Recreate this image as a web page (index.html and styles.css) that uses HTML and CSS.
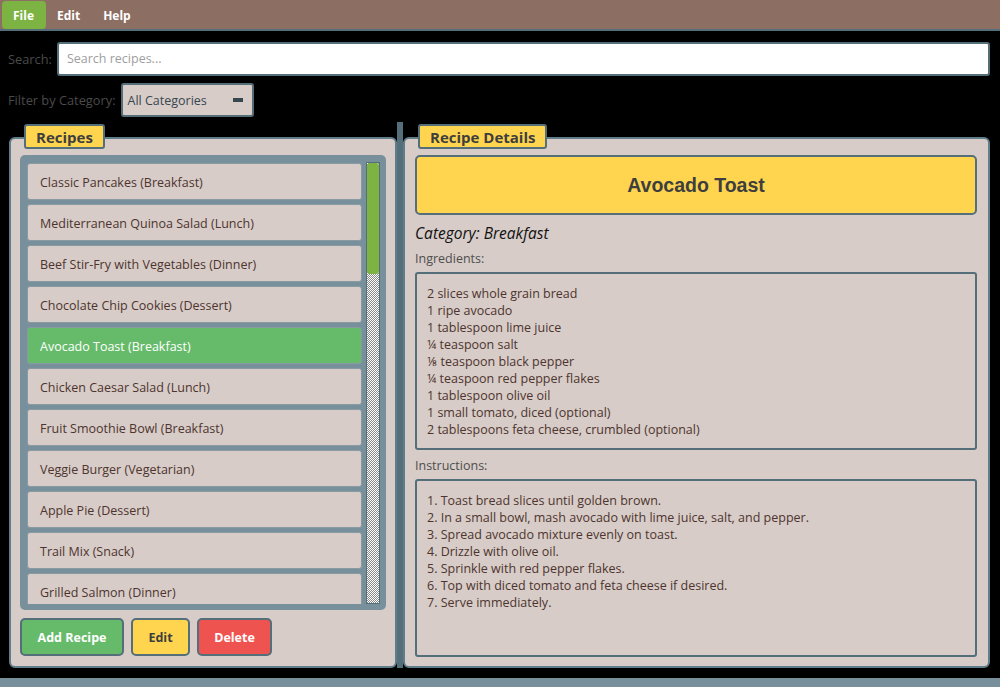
FILE: index.html
```html
<!DOCTYPE html>
<html>
<head>
<meta charset="utf-8">
<link rel="stylesheet" href="styles.css">
</head>
<body>
<div class="menubar">
  <span class="menu-item active">File</span>
  <span class="menu-item">Edit</span>
  <span class="menu-item">Help</span>
</div>
<div class="toolbar">
  <div class="row">
    <label class="lbl">Search:</label>
    <div class="entry">Search recipes...</div>
  </div>
  <div class="row">
    <label class="lbl">Filter by Category:</label>
    <div class="combo"><span>All Categories</span><span class="combo-ind"></span></div>
  </div>
</div>
<div class="main">
  <section class="panel left">
    <div class="legend">Recipes</div>
    <div class="listbox">
      <div class="items">
        <div class="item">Classic Pancakes (Breakfast)</div>
        <div class="item">Mediterranean Quinoa Salad (Lunch)</div>
        <div class="item">Beef Stir-Fry with Vegetables (Dinner)</div>
        <div class="item">Chocolate Chip Cookies (Dessert)</div>
        <div class="item selected">Avocado Toast (Breakfast)</div>
        <div class="item">Chicken Caesar Salad (Lunch)</div>
        <div class="item">Fruit Smoothie Bowl (Breakfast)</div>
        <div class="item">Veggie Burger (Vegetarian)</div>
        <div class="item">Apple Pie (Dessert)</div>
        <div class="item">Trail Mix (Snack)</div>
        <div class="item">Grilled Salmon (Dinner)</div>
      </div>
      <div class="scrollbar"><div class="thumb"></div></div>
    </div>
    <div class="buttons">
      <button class="btn green">Add Recipe</button>
      <button class="btn yellow">Edit</button>
      <button class="btn red">Delete</button>
    </div>
  </section>
  <div class="sash"></div>
  <section class="panel right">
    <div class="legend">Recipe Details</div>
    <div class="title">Avocado Toast</div>
    <div class="category">Category: Breakfast</div>
    <div class="sublabel">Ingredients:</div>
    <div class="textbox">2 slices whole grain bread
1 ripe avocado
1 tablespoon lime juice
¼ teaspoon salt
⅛ teaspoon black pepper
¼ teaspoon red pepper flakes
1 tablespoon olive oil
1 small tomato, diced (optional)
2 tablespoons feta cheese, crumbled (optional)</div>
    <div class="sublabel">Instructions:</div>
    <div class="textbox">1. Toast bread slices until golden brown.
2. In a small bowl, mash avocado with lime juice, salt, and pepper.
3. Spread avocado mixture evenly on toast.
4. Drizzle with olive oil.
5. Sprinkle with red pepper flakes.
6. Top with diced tomato and feta cheese if desired.
7. Serve immediately.</div>
  </section>
</div>
<div class="statusbar"></div>
</body>
</html>
```
FILE: styles.css
```css
* { box-sizing: border-box; }
html, body { margin: 0; padding: 0; }
body {
  width: 1000px;
  height: 687px;
  overflow: hidden;
  background: #000;
  font-family: "Open Sans", "Noto Sans", sans-serif;
  font-size: 12.5px;
  color: #4e342e;
  display: flex;
  flex-direction: column;
}
.menubar {
  height: 31px;
  background: #8d6e63;
  border-bottom: 2px solid #546e7a;
  display: flex;
  align-items: flex-start;
  padding: 1px 2px 0;
}
.menu-item {
  color: #fff;
  font-weight: bold;
  font-size: 12px;
  height: 28px;
  line-height: 30px;
  padding: 0 12px 0 11px;
  border-radius: 4px;
}
.menu-item.active { background: #7cb342; }
.toolbar {
  padding: 11px 10px 0 8px;
  display: flex;
  flex-direction: column;
  gap: 7px;
}
.row { display: flex; align-items: center; gap: 5px; }
.lbl { color: #4a4a4a; font-size: 12.8px; }
.entry {
  flex: 1;
  height: 34px;
  background: #fff;
  border: 2px solid #546e7a;
  border-radius: 3px;
  padding: 0 8px;
  line-height: 30px;
  color: #9e9e9e;
  font-size: 12.5px;
}
.combo {
  width: 133px;
  height: 34px;
  background: #d7ccc8;
  border: 2px solid #546e7a;
  border-radius: 3px;
  display: flex;
  align-items: center;
  justify-content: space-between;
  padding: 0 9px 0 5px;
  color: #37474f;
  font-size: 12.5px;
}
.combo-ind { width: 10px; height: 4px; background: #37474f; }
.main {
  flex: 1;
  display: flex;
  padding: 5px 10px 10px 9px;
  min-height: 0;
}
.panel {
  position: relative;
  margin-top: 15px;
  background: #d7ccc8;
  border: 2px solid #607d8b;
  border-radius: 6px;
  display: flex;
  flex-direction: column;
}
.panel.left { width: 388px; padding: 16px 9px 10px 9px; }
.panel.right { flex: 1; padding: 16px 11px 9px 10px; }
.sash { width: 6px; background: #546e7a; }
.legend {
  position: absolute;
  top: -15px;
  left: 13px;
  background: #ffd54f;
  border: 2px solid #546e7a;
  border-radius: 3px;
  height: 25px;
  padding: 0 10px;
  line-height: 22px;
  font-weight: bold;
  font-size: 15px;
  color: #3e3e3e;
}
.listbox {
  height: 456px;
  background: #78909c;
  border-radius: 5px;
  padding: 8px 6px 6px 7px;
  display: flex;
  gap: 4px;
  overflow: hidden;
}
.items {
  flex: 1;
  display: flex;
  flex-direction: column;
  gap: 4px;
  overflow: hidden;
}
.item {
  flex: none;
  height: 37px;
  background: #d7ccc8;
  border: 1px solid #8a9aa3;
  border-radius: 3px;
  padding: 0 12px;
  line-height: 37px;
  color: #4e342e;
}
.item.selected { background: #66bb6a; color: #fff; }
.scrollbar {
  width: 14px;
  border: 1px solid #546e7a;
  background-color: #fff;
  background-image: conic-gradient(#8a8a8a 25%, #fff 0 50%, #8a8a8a 0 75%, #fff 0);
  background-size: 2px 2px;
  margin-top: -1px;
}
.thumb {
  height: 111px;
  background: #7cb342;
  border-radius: 3px;
}
.buttons { display: flex; gap: 7px; margin-top: 8px; }
.btn {
  height: 38px;
  border: 2px solid #546e7a;
  border-radius: 5px;
  font-family: "Open Sans", "Noto Sans", sans-serif;
  font-weight: bold;
  font-size: 12.5px;
  color: #fff;
  padding: 0;
}
.btn.green { background: #66bb6a; width: 104px; }
.btn.yellow { background: #ffd54f; color: #3e3e3e; width: 59px; }
.btn.red { background: #ef5350; width: 75px; }
.title {
  height: 60px;
  background: #ffd54f;
  border: 2px solid #546e7a;
  border-radius: 5px;
  display: flex;
  align-items: center;
  justify-content: center;
  font-family: "Liberation Sans", Arial, sans-serif;
  font-weight: bold;
  font-size: 19.5px;
  color: #3e3e3e;
}
.category {
  font-style: italic;
  font-size: 15.5px;
  color: #111;
  margin-top: 7px;
  height: 22px;
  line-height: 22px;
}
.sublabel {
  font-size: 12.5px;
  color: #4e4e4e;
  margin-top: 6px;
  height: 17px;
  line-height: 17px;
}
.textbox + .sublabel { margin-top: 7px; }
.textbox {
  margin-top: 5px;
  height: 178px;
  border: 2px solid #546e7a;
  border-radius: 3px;
  padding: 11px 10px;
  white-space: pre;
  line-height: 17px;
  color: #4e342e;
}
.statusbar { height: 9px; background: #78909c; }
```
